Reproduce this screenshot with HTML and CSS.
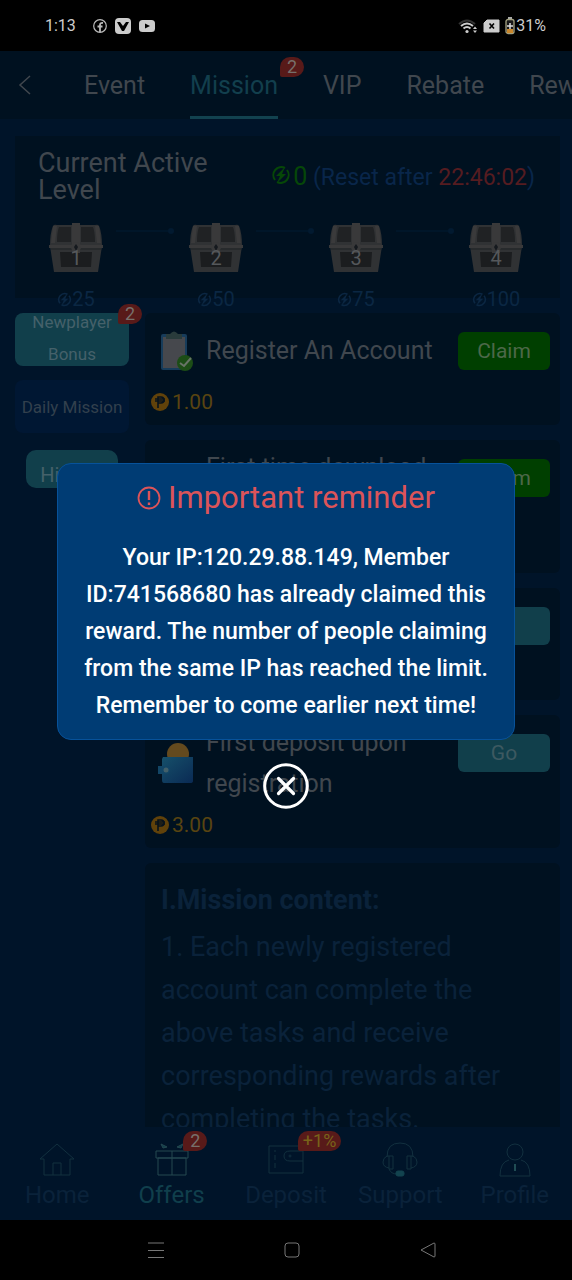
FILE: index.html
```html
<!DOCTYPE html>
<html lang="en">
<head>
<meta charset="utf-8">
<meta name="viewport" content="width=device-width, initial-scale=1">
<title>Mission</title>
<link rel="stylesheet" href="styles.css">
</head>
<body>
<svg class="defs" aria-hidden="true">
  <symbol id="chest" viewBox="0 0 56 50">
    <path d="M5 3Q6 1 9 2H47Q50 1 51 3Q54 10 54 23L50 49H6L2 23Q2 10 5 3Z" fill="#303234"/>
    <path d="M11 4H23V19H9Q9 9 11 4ZM33 4H45Q47 9 47 19H33Z" fill="#202224"/>
    <path d="M12 29H44L43 44H13Z" fill="#1b1d1f"/>
    <path d="M24 0H32V30H24Z" fill="#39393a"/>
    <path d="M1 22H55V25H1Z" fill="#39393a"/>
    <path d="M3 26H53" stroke="#1f2225"/>
    <path d="M5 3H9L7 20H3ZM47 3H51L53 20H49Z" fill="#3a3a3b"/>
    <circle cx="28" cy="24" r="5" fill="#39393a"/>
    <path d="M28 21L30 24L28 28L26 24Z" fill="#15191e"/>
  </symbol>
  <symbol id="bolt" viewBox="0 0 20 20">
    <path d="M14 3A8 8 0 0 0 4 15M6 17A8 8 0 0 0 16 5" fill="none" stroke="currentColor" stroke-width="2"/>
    <path d="M14 2L5 11H9L6 18L15 9H11Z" fill="currentColor"/>
  </symbol>
  <symbol id="peso" viewBox="0 0 20 20">
    <circle cx="10" cy="10" r="9" fill="#61420a"/>
    <path d="M8 16V5H11A3 3 0 0 1 11 11H8M5 7H15M5 9H15" fill="none" stroke="#07121c" stroke-width="1.6"/>
  </symbol>
</svg>

<header class="status">
  <span class="clock">1:13</span>
  <svg class="status-icon" viewBox="0 0 16 16" width="16" height="16"><circle cx="8" cy="8" r="6.3" fill="none" stroke="#bbb" stroke-width="1.2"/><path d="M8 14V7Q8 4.5 11 5M5.5 8.5H10.5" fill="none" stroke="#bbb" stroke-width="1.8"/></svg>
  <svg class="status-icon" viewBox="0 0 18 18" width="18" height="18"><rect x="1" y="1" width="16" height="16" rx="4" fill="#ccc"/><path d="M3 5H6L9 9L12 5H15L10 14H8Z" fill="#000"/></svg>
  <svg class="status-icon" viewBox="0 0 18 14" width="18" height="14"><rect x="1" y="1" width="16" height="12" rx="3.5" fill="#ccc"/><path d="M7 4.5L12 7L7 9.5Z" fill="#000"/></svg>
  <span class="spacer"></span>
  <svg viewBox="0 0 20 16" width="20" height="16"><path d="M1 6Q9-1 17 6" fill="none" stroke="#333" stroke-width="2"/><path d="M3 8Q9 3 15 8M5.500 10.500Q9 7.500 12.500 10.500" fill="none" stroke="#ccc" stroke-width="2"/><circle cx="9" cy="13.500" r="1.600" fill="#ccc"/><path d="M15 11L17 8.500L19 11ZM15 12.500L17 15L19 12.500Z" fill="#ccc"/></svg>
  <svg viewBox="0 0 17 14" width="17" height="14"><path d="M4 1H16V13H1V4Z" fill="#ccc" stroke="#ccc" stroke-linejoin="round"/><path d="M6.500 4.500L11 9.500M11 4.500L6.500 9.500" stroke="#000" stroke-width="1.600"/></svg>
  <svg viewBox="0 0 10 18" width="10" height="18"><path d="M3 1H7" stroke="#aaa" stroke-width="2"/><rect x="1" y="2.500" width="8" height="14" rx="2" fill="#181818" stroke="#a5a382" stroke-width="1.300"/><path d="M2 12H8V16H2Z" fill="#c8862b"/><path d="M5 6V12M2 9H8" stroke="#ddd" stroke-width="1.500"/></svg>
  <span class="battery">31%</span>
</header>

<div class="app">
  <nav class="tabs" aria-label="Sections">
    <button class="back" aria-label="Back"><svg viewBox="0 0 14 20" width="14" height="20"><path d="M12 1L2 10L12 19" fill="none" stroke="currentColor" stroke-width="1.500"/></svg></button>
    <a class="tab" href="#event">Event</a>
    <a class="tab active" href="#mission" aria-current="page">Mission<span class="badge tab-badge">2</span></a>
    <a class="tab" href="#vip">VIP</a>
    <a class="tab" href="#rebate">Rebate</a>
    <a class="tab" href="#rewards">Rewards</a>
  </nav>

  <main class="content">
    <section class="level">
      <div class="level-head">
        <h1>Current Active Level</h1>
        <p class="reset"><svg class="score-icon"><use href="#bolt"/></svg><span class="score">0</span> (Reset after <time>22:46:02</time>)</p>
      </div>
      <ol class="chests">
        <li class="chest"><div class="box"><svg><use href="#chest"/></svg><span>1</span></div><div class="points"><svg><use href="#bolt"/></svg>25</div></li>
        <li class="arrow" aria-hidden="true"></li>
        <li class="chest"><div class="box"><svg><use href="#chest"/></svg><span>2</span></div><div class="points"><svg><use href="#bolt"/></svg>50</div></li>
        <li class="arrow" aria-hidden="true"></li>
        <li class="chest"><div class="box"><svg><use href="#chest"/></svg><span>3</span></div><div class="points"><svg><use href="#bolt"/></svg>75</div></li>
        <li class="arrow" aria-hidden="true"></li>
        <li class="chest"><div class="box"><svg><use href="#chest"/></svg><span>4</span></div><div class="points"><svg><use href="#bolt"/></svg>100</div></li>
      </ol>
    </section>

    <div class="columns">
      <aside class="side">
        <button class="side-item selected">Newplayer Bonus<span class="badge side-badge">2</span></button>
        <button class="side-item">Daily Mission</button>
        <button class="history">History</button>
      </aside>

      <div class="tasks">
        <article class="card">
          <div class="task-row">
            <svg class="task-icon" viewBox="0 0 36 42"><rect x="3" y="4" width="26" height="36" rx="2" fill="#173c5a"/><rect x="5" y="7" width="22" height="31" fill="#46484d"/><path d="M8 4H12Q16-1 20 4H24V9H8Z" fill="#293b3b"/><circle cx="27" cy="33" r="8" fill="#1c4d16"/><path d="M22 33L26 36L33 28" fill="none" stroke="#687467" stroke-width="2"/></svg>
            <h2>Register An Account</h2>
            <button class="action claim">Claim</button>
          </div>
          <p class="reward"><svg><use href="#peso"/></svg>1.00</p>
        </article>
        <article class="card">
          <div class="task-row tall">
            <span class="task-icon"></span>
            <h2>First time download</h2>
            <button class="action claim">Claim</button>
          </div>
          <div class="reward"></div>
        </article>
        <article class="card">
          <div class="task-row">
            <span class="task-icon"></span>
            <h2></h2>
            <button class="action go" aria-label="Open task"></button>
          </div>
          <div class="reward"></div>
        </article>
        <article class="card">
          <div class="task-row tall">
            <svg class="task-icon" viewBox="0 0 36 42"><defs><linearGradient id="wallet" x1="0" y1="0" x2="1" y2="1"><stop offset="0" stop-color="#16506a"/><stop offset="1" stop-color="#0a2a54"/></linearGradient></defs><circle cx="20" cy="12" r="11" fill="#644a1e"/><path d="M5 15H35V39Q35 41 32 41H6Q4 41 4 38V17Z" fill="url(#wallet)"/><path d="M0 24H8Q12 24 12 28Q12 32 8 32H0Z" fill="#124565"/><circle cx="8" cy="28" r="2.500" fill="#42606a"/></svg>
            <h2>First deposit upon registration</h2>
            <button class="action go">Go</button>
          </div>
          <p class="reward"><svg><use href="#peso"/></svg>3.00</p>
        </article>
        <article class="card rules">
          <h3>I.Mission content:</h3>
          <p>1. Each newly registered account can complete the above tasks and receive corresponding rewards after completing the tasks.</p>
        </article>
      </div>
    </div>
  </main>

  <nav class="bottom" aria-label="Main">
    <a href="#home"><svg viewBox="0 0 36 36"><path d="M1 17L18 2L35 17H31V33H5V17ZM14 33V21H22V33" /></svg>Home</a>
    <a href="#offers" class="current"><svg viewBox="0 0 36 36"><path d="M2 9H34V16H2ZM4 16H32V33H4ZM18 9V33"/><path d="M7 2L13 5L9 6ZM29 2L23 5L27 6Z" fill="currentColor"/></svg>Offers<span class="badge nav-badge">2</span></a>
    <a href="#deposit"><svg viewBox="0 0 36 36"><path d="M1 4H35V31H1ZM7 8V10M7 13V18M7 21V26M35 9H22Q16 9 16 14Q16 19 22 19H35"/><circle cx="22" cy="14" r="1"/></svg>Deposit<span class="badge nav-badge bonus">+1%</span></a>
    <a href="#support"><svg viewBox="0 0 36 36"><path d="M5 15Q5 1 18 1Q31 1 31 15M5 14H11V27H7V14M5 14Q1 16 1 20Q1 25 7 26M31 14H25V27H29V14M31 14Q35 16 35 20Q35 25 29 26M7 27Q9 32 15 32"/><rect x="14" y="29" width="8" height="5" rx="2" fill="#12434f" stroke="#12434f"/></svg>Support</a>
    <a href="#profile"><svg viewBox="0 0 36 36"><circle cx="18" cy="10" r="8"/><path d="M12 18Q3 20 3 34H33Q33 20 24 18"/><path d="M18 22V29" stroke="#204c54" stroke-width="2"/></svg>Profile</a>
  </nav>

  <div class="overlay">
    <div class="dialog" role="dialog" aria-modal="true" aria-labelledby="dialog-title">
      <h2 id="dialog-title"><svg viewBox="0 0 24 24"><circle cx="12" cy="12" r="10.500" fill="none" stroke="currentColor" stroke-width="1.800"/><path d="M12 5V14M12 16.500V19" stroke="currentColor" stroke-width="2.400"/></svg>Important reminder</h2>
      <p>Your IP:120.29.88.149, Member ID:741568680 has already claimed this reward. The number of people claiming from the same IP has reached the limit. Remember to come earlier next time!</p>
    </div>
    <button class="close" aria-label="Close"><svg viewBox="0 0 46 46"><circle cx="23" cy="23" r="21.300" fill="none" stroke="#fff" stroke-width="3"/><path d="M15.500 15.500L30.500 30.500M30.500 15.500L15.500 30.500" stroke="#fff" stroke-width="3.200" stroke-linecap="round"/></svg></button>
  </div>
</div>

<footer class="system">
  <button aria-label="Menu"><svg viewBox="0 0 18 18"><path d="M1 2H17M1 9.500H17M1 16.500H17"/></svg></button>
  <button aria-label="Home"><svg viewBox="0 0 18 18"><rect x="2" y="2" width="14" height="14" rx="3"/></svg></button>
  <button aria-label="Back"><svg viewBox="0 0 18 18"><path d="M2 9L15 2Q16 2 16 3V15Q16 16 15 16Z"/></svg></button>
</footer>
</body>
</html>
```

FILE: styles.css
```css
* {
  box-sizing: border-box;
}

body {
  margin: 0;
  height: 100vh;
  display: flex;
  flex-direction: column;
  overflow: hidden;
  background: #000;
  color: #40474e;
  font-family: Roboto, "Liberation Sans", sans-serif;
}

h1, h2, h3, p, ol {
  margin: 0;
  padding: 0;
  font-weight: 400;
}

button {
  border: 0;
  padding: 0;
  background: none;
  color: inherit;
  font: inherit;
}

a {
  color: inherit;
  text-decoration: none;
}

svg {
  flex: none;
}

.defs {
  position: absolute;
  width: 0;
  height: 0;
}

.status {
  height: 51px;
  flex: none;
  display: flex;
  align-items: center;
  gap: 5px;
  padding: 0 26px 0 45px;
  color: #ccc;
  font-size: 16px;
}

.clock {
  margin-right: 10px;
}

.status-icon {
  margin-right: 1px;
}

.clock + .status-icon {
  margin-left: 1px;
}

.spacer {
  flex: 1;
}

.battery {
  margin-left: -4px;
}

.app {
  position: relative;
  flex: 1;
  min-height: 0;
  display: flex;
  flex-direction: column;
  background: #001429;
}

.tabs {
  flex: none;
  height: 68px;
  display: flex;
  gap: 45px;
  padding-left: 18px;
  overflow: hidden;
  background: #001120;
  font-size: 25px;
}

.back {
  width: 21px;
  flex: none;
  display: flex;
  align-items: center;
}

.tab {
  position: relative;
  flex: none;
  line-height: 69px;
}

.active {
  color: #123f4d;
  border-bottom: 3px solid #12424f;
}

.badge {
  position: absolute;
  min-width: 24px;
  height: 20px;
  padding: 0 6px;
  border-radius: 10px 10px 10px 2px;
  background: #581a19;
  color: #77706b;
  font-size: 18px;
  line-height: 20px;
  text-align: center;
}

.tab-badge {
  top: 6px;
  right: -26px;
}

.content {
  flex: 1;
  min-height: 0;
  overflow: hidden;
  padding: 17px 12px 0 15px;
}

.level {
  height: 162px;
  background: #001120;
}

.level-head {
  display: flex;
  align-items: center;
  justify-content: space-between;
  padding: 14px 25px 0 23px;
}

h1 {
  width: 200px;
  font-size: 27px;
  line-height: 27px;
}

.reset {
  color: #09264a;
  font-size: 23px;
  line-height: 30px;
  white-space: nowrap;
}

.reset time {
  color: #551c20;
}

.score-icon {
  width: 20px;
  height: 20px;
  margin-right: 2px;
  color: #064708;
}

.score {
  color: #064708;
  font-size: 25px;
}

.chests {
  display: flex;
  list-style: none;
  padding: 19px 36px 0 33px;
}

.chest {
  width: 56px;
  flex: none;
}

.box {
  display: grid;
  height: 50px;
}

.box svg, .box span {
  grid-area: 1 / 1;
  width: 56px;
  height: 50px;
}

.box span {
  padding-top: 15px;
  color: #55585b;
  font-size: 20px;
  line-height: 40px;
  text-align: center;
}

.points {
  display: flex;
  align-items: center;
  justify-content: center;
  margin-top: 14px;
  color: #0b2743;
  font-size: 20px;
  line-height: 24px;
}

.points svg {
  width: 15px;
  height: 15px;
}

.arrow {
  flex: 1;
  height: 2px;
  margin: 7px 14px 0 12px;
  background: #001629;
}

.arrow::after {
  content: "";
  display: block;
  width: 6px;
  height: 6px;
  margin: 0 0 0 auto;
  border-radius: 50%;
  background: #021a30;
  translate: 0 -2px;
}

.columns {
  display: flex;
  gap: 16px;
  margin-top: 15px;
}

.side {
  width: 114px;
  flex: none;
  display: flex;
  flex-direction: column;
  align-items: center;
  gap: 14px;
}

.side-item {
  position: relative;
  width: 100%;
  height: 53px;
  display: flex;
  align-items: center;
  justify-content: center;
  border-radius: 8px;
  background: #001733;
  color: #32404d;
  font-size: 17px;
  line-height: 32px;
}

.selected {
  padding-bottom: 3px;
  background: #113f4b;
  color: #45616a;
}

.side-badge {
  top: -9px;
  right: -13px;
}

.history {
  width: 92px;
  height: 38px;
  margin-top: 3px;
  padding-top: 12px;
  border-radius: 10px;
  background: #113f4b;
  color: #45616a;
  font-size: 20px;
  line-height: 26px;
}

.tasks {
  flex: 1;
  min-width: 0;
  display: flex;
  flex-direction: column;
  gap: 15px;
}

.card {
  padding: 7px 10px 3px 5px;
  border-radius: 6px;
  background: #001120;
}

.task-row {
  display: flex;
  align-items: center;
  min-height: 61px;
  padding-left: 8px;
}

.tall {
  min-height: 82px;
}

.task-icon {
  width: 36px;
  height: 42px;
  flex: none;
}

.task-row h2 {
  flex: 1;
  margin-left: 12px;
  font-size: 25px;
  line-height: 41px;
}

.tall h2 {
  align-self: flex-start;
}

.action {
  width: 92px;
  height: 38px;
  flex: none;
  align-self: flex-start;
  margin-top: 12px;
  border-radius: 6px;
  font-size: 21px;
}

.claim {
  background: #003f00;
  color: #4c6849;
}

.go {
  background: #113f4b;
  color: #3d5961;
}

.reward {
  height: 41px;
  display: flex;
  align-items: center;
  gap: 2px;
  color: #594411;
  font-size: 21px;
}

.reward svg {
  width: 20px;
  height: 20px;
}

.rules {
  padding: 16px 40px 0 16px;
  color: #0a223a;
  font-size: 27px;
  line-height: 43px;
}

.rules h3 {
  margin-bottom: 4px;
  font-size: 27px;
  font-weight: 700;
}

.bottom {
  flex: none;
  height: 93px;
  display: grid;
  grid-template-columns: repeat(5, 1fr);
  color: #0a223a;
  font-size: 24px;
}

.bottom a {
  position: relative;
  display: flex;
  flex-direction: column;
  align-items: center;
  padding-top: 15px;
  line-height: 34px;
}

.bottom svg {
  width: 36px;
  height: 36px;
  fill: none;
  stroke: #12303f;
}

.bottom .current {
  color: #103f4c;
}

.bottom .current svg {
  stroke: #254850;
}

.nav-badge {
  top: 4px;
  left: 69px;
}

.bonus {
  padding: 0 5px;
  color: #786319;
}

.overlay {
  position: absolute;
  inset: 0;
  display: flex;
  flex-direction: column;
  align-items: center;
  justify-content: center;
  gap: 23px;
}

.dialog {
  width: 80%;
  padding: 9px 20px 15px;
  border: 1px solid #07529a;
  border-radius: 14px;
  background: #003c74;
  color: #fff;
  text-align: center;
}

.dialog h2 {
  display: flex;
  align-items: center;
  justify-content: center;
  gap: 7px;
  margin-bottom: 16px;
  color: #dc5459;
  font-size: 31px;
  line-height: 50px;
}

.dialog h2 svg {
  width: 24px;
  height: 24px;
}

.dialog p {
  font-size: 23px;
  font-weight: 500;
  line-height: 37px;
}

.close {
  width: 46px;
  height: 46px;
}

.close svg {
  display: block;
}

.system {
  flex: none;
  height: 60px;
  display: flex;
  align-items: center;
  justify-content: center;
  gap: 118px;
  padding-left: 11px;
}

.system button {
  width: 18px;
  height: 18px;
}

.system svg {
  display: block;
  fill: none;
  stroke: #777;
  stroke-width: 1px;
}
```
